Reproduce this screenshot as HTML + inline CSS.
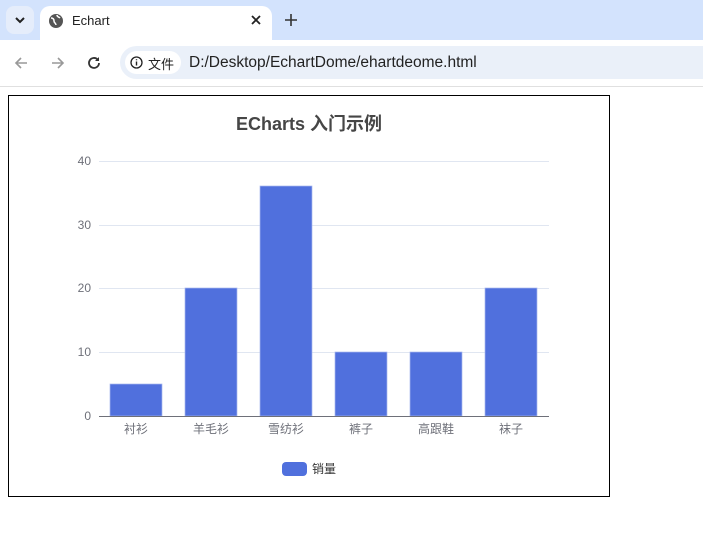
<!DOCTYPE html>
<html><head><meta charset="utf-8"><style>
*{margin:0;padding:0;box-sizing:border-box}
body{width:703px;height:542px;overflow:hidden;background:#fff;font-family:"Liberation Sans","Noto Sans CJK SC",sans-serif;position:relative}
.tabbar{position:absolute;left:0;top:0;width:703px;height:40px;background:#d3e3fd}
.tabbtn{position:absolute;left:6px;top:6px;width:28px;height:28px;border-radius:8px;background:#e5edfb}
.tab{position:absolute;left:40px;top:6px;width:232px;height:36px;background:#fff;border-radius:10px 10px 0 0}
.toolbar{position:absolute;left:0;top:40px;width:703px;height:47px;background:#fff;border-bottom:1px solid #e0e0e0}
.addr{position:absolute;left:120px;top:6px;width:600px;height:33px;background:#eaf0f9;border-radius:17px}
.chip{position:absolute;left:5px;top:5px;width:56px;height:23px;background:#fff;border-radius:12px;font-size:13px;color:#222}
.frame{position:absolute;left:8px;top:95px;width:602px;height:402px;border:1px solid #000}
</style></head><body>
<div class="tabbar">
 <div class="tabbtn"><svg width="28" height="28"><path d="M10 12l4 4 4-4" stroke="#222" stroke-width="2" fill="none"/></svg></div>
 <div class="tab">
  <svg style="position:absolute;left:8px;top:7px" width="16" height="16" viewBox="0 0 16 16"><circle cx="8" cy="8" r="7" fill="#555"/><path d="M3 5c2 0 3 1 3 3s2 2 2 4M9 2c0 2 2 2 3 3" stroke="#fff" stroke-width="1.5" fill="none"/></svg>
  <span style="position:absolute;left:32px;top:7px;font-size:13px;color:#222">Echart</span>
  <svg style="position:absolute;left:210px;top:8px" width="12" height="12"><path d="M2 2l8 8M10 2l-8 8" stroke="#222" stroke-width="1.8"/></svg>
 </div>
 <svg style="position:absolute;left:284px;top:13px" width="14" height="14"><path d="M7 1v12M1 7h12" stroke="#333" stroke-width="1.6"/></svg>
</div>
<div class="toolbar">
 <svg style="position:absolute;left:13px;top:15px" width="16" height="16"><path d="M14 8H3M8 3L3 8l5 5" stroke="#999" stroke-width="1.6" fill="none"/></svg>
 <svg style="position:absolute;left:50px;top:15px" width="16" height="16"><path d="M2 8h11M8 3l5 5-5 5" stroke="#999" stroke-width="1.6" fill="none"/></svg>
 <svg style="position:absolute;left:86px;top:15px" width="16" height="16"><path d="M13 8a5 5 0 1 1-1.5-3.6" stroke="#333" stroke-width="1.8" fill="none"/><path d="M13 2v4h-4z" fill="#333"/></svg>
 <div class="addr">
  <div class="chip"><svg style="position:absolute;left:5px;top:5px" width="13" height="13"><circle cx="6.5" cy="6.5" r="5.5" stroke="#222" stroke-width="1.3" fill="none"/><path d="M6.5 5.5v4M6.5 3.2v1" stroke="#222" stroke-width="1.4"/></svg><span style="position:absolute;left:23px;top:3px">文件</span></div>
  <span style="position:absolute;left:69px;top:8px;font-size:15.5px;color:#222">D:/Desktop/EchartDome/ehartdeome.html</span>
 </div>
</div>
<div class="frame"></div>
<svg style="position:absolute;left:0;top:0" width="703" height="542" font-family="Liberation Sans, Noto Sans CJK SC, sans-serif">
 <text x="309" y="130" text-anchor="middle" font-size="18" font-weight="bold" fill="#464646">ECharts 入门示例</text>
 <g stroke="#e0e6f1" stroke-width="1">
  <line x1="99" y1="161.5" x2="549" y2="161.5"/><line x1="99" y1="225.5" x2="549" y2="225.5"/>
  <line x1="99" y1="288.5" x2="549" y2="288.5"/><line x1="99" y1="352.5" x2="549" y2="352.5"/>
 </g>
 <g font-size="12" fill="#6e7079" text-anchor="end">
  <text x="91" y="165">40</text><text x="91" y="229">30</text><text x="91" y="292">20</text><text x="91" y="356">10</text><text x="91" y="420">0</text>
 </g>
 <g fill="#5070dd" stroke="#a9b8ee" stroke-width="0.7">
  <rect x="110" y="384" width="52" height="32"/>
  <rect x="185" y="288" width="52" height="128"/>
  <rect x="260" y="186" width="52" height="230"/>
  <rect x="335" y="352" width="52" height="64"/>
  <rect x="410" y="352" width="52" height="64"/>
  <rect x="485" y="288" width="52" height="128"/>
 </g>
 <line x1="99" y1="416.5" x2="549" y2="416.5" stroke="#6e7079"/>
 <g font-size="12" fill="#6e7079" text-anchor="middle">
  <text x="136" y="433">衬衫</text><text x="211" y="433">羊毛衫</text><text x="286" y="433">雪纺衫</text><text x="361" y="433">裤子</text><text x="436" y="433">高跟鞋</text><text x="511" y="433">袜子</text>
 </g>
 <rect x="282" y="462" width="25" height="14" rx="4" fill="#5070dd"/>
 <text x="312" y="473" font-size="12" fill="#333">销量</text>
</svg>
</body></html>
